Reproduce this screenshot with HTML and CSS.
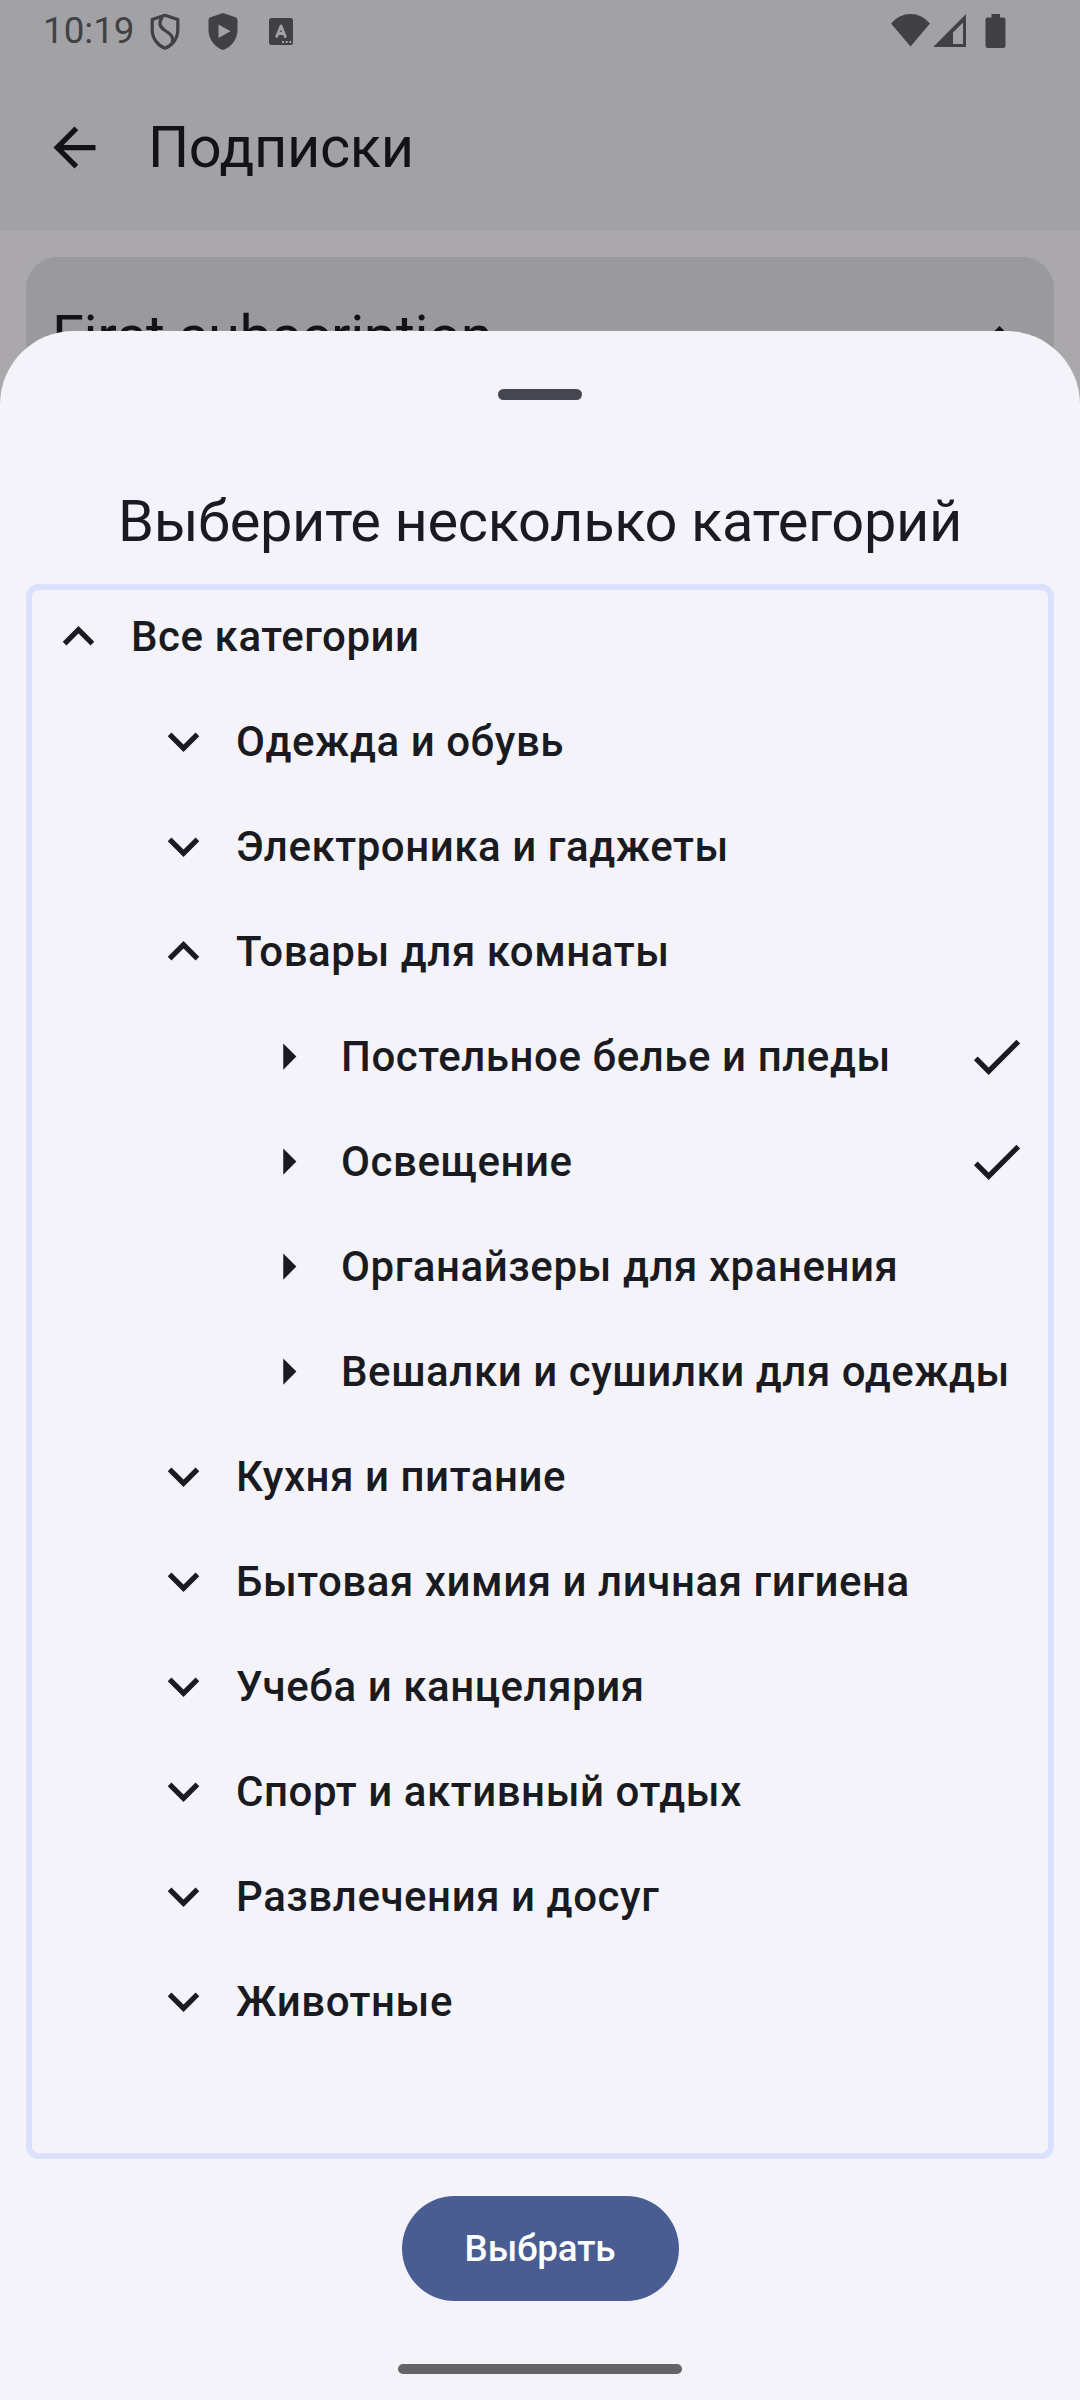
FILE: index.html
```html
<!DOCTYPE html>
<html lang="ru">
<head>
<meta charset="utf-8">
<title>Подписки</title>
<link rel="stylesheet" href="styles.css">
</head>
<body>
<svg class="defs" width="0" height="0">
  <symbol id="less" viewBox="0 0 24 24"><path d="M12 8l-6 6 1.41 1.41L12 10.83l4.59 4.58L18 14z"/></symbol>
  <symbol id="more" viewBox="0 0 24 24"><path d="M16.59 8.59L12 13.17 7.41 8.59 6 10l6 6 6-6z"/></symbol>
  <symbol id="right" viewBox="0 0 24 24"><path d="M10 17l5-5-5-5v10z"/></symbol>
  <symbol id="check" viewBox="0 0 24 24"><path d="M9 16.17L4.83 12l-1.42 1.41L9 19 21 7l-1.41-1.41z"/></symbol>
</svg>
<div class="screen">
  <header class="top">
    <div class="status">
      <span class="time">10:19</span>
      <svg class="shield" width="30" height="37" viewBox="0 0 30 37"><path d="M15 2.3L27.8 6.5V17c0 8.500-5.500 15.500-12.800 18.200C7.700 32.500 2.200 25.500 2.200 17V6.500z" fill="none" stroke="currentColor" stroke-width="3.200" stroke-linejoin="round"/><path d="M12.500 4C8.500 9 9 13.500 15 17.500c6 3.800 8.500 6 7.300 12" fill="none" stroke="currentColor" stroke-width="3.200"/></svg>
      <svg class="shield play" width="30" height="37" viewBox="0 0 30 37"><path d="M15 0L27.600 4.300Q29.500 5 29.500 7V17c0 9-6 17-14.500 20C6.500 34 .5 26 .5 17V7Q.5 5 2.400 4.300zM10.500 11.500v13.500L22.500 18.200z" fill="currentColor" fill-rule="evenodd"/></svg>
      <svg class="lang" width="24" height="27" viewBox="0 0 24 27"><rect width="24" height="27" rx="2.500" fill="currentColor"/><path d="M7.700 18.500L12 8l4.300 10.500M9.200 15.500h5.600" fill="none" stroke="#a2a1a6" stroke-width="2.800" stroke-linecap="round" stroke-linejoin="round"/><path d="M13 23h2v2h-2zM16.700 23h2v2h-2zM20.300 23h2v2h-2z" fill="#a2a1a6"/></svg>
      <span class="spacer"></span>
      <svg class="signals" width="115" height="35" viewBox="0 0 115 35" fill="currentColor"><path d="M0 9.500Q8 0 19.500 0T39 9.500L19.500 32.500z"/><path d="M75 0v33H42.200zM72 8.500L62 18.500V30h10z" fill-rule="evenodd"/><path d="M100.500 0h8.500v3.500h3.200q2.300 0 2.300 2.300v26q0 2.200-2.300 2.200H96.800q-2.300 0-2.300-2.200v-26q0-2.300 2.300-2.300h3.700z"/></svg>
    </div>
    <div class="appbar">
      <svg class="icon" viewBox="0 0 24 24"><path d="M20 11H7.830l5.590-5.590L12 4l-8 8 8 8 1.410-1.410L7.830 13H20z"/></svg>
      <h1 class="title">Подписки</h1>
    </div>
  </header>
  <main class="content">
    <section class="card"><span class="title">First subscription</span><svg class="icon"><use href="#less"/></svg></section>
  </main>

  <div class="sheet">
    <div class="handle"></div>
    <h2 class="title sheet-title">Выберите несколько категорий</h2>
    <div class="tree">
      <div class="row"><span class="toggle"><svg class="icon"><use href="#less"/></svg></span><span>Все категории</span></div>
      <div class="row l1"><span class="toggle"><svg class="icon"><use href="#more"/></svg></span><span>Одежда и обувь</span></div>
      <div class="row l1"><span class="toggle"><svg class="icon"><use href="#more"/></svg></span><span>Электроника и гаджеты</span></div>
      <div class="row l1"><span class="toggle"><svg class="icon"><use href="#less"/></svg></span><span>Товары для комнаты</span></div>
      <div class="row l2"><span class="toggle"><svg class="icon"><use href="#right"/></svg></span><span>Постельное белье и пледы</span><svg class="icon check"><use href="#check"/></svg></div>
      <div class="row l2"><span class="toggle"><svg class="icon"><use href="#right"/></svg></span><span>Освещение</span><svg class="icon check"><use href="#check"/></svg></div>
      <div class="row l2"><span class="toggle"><svg class="icon"><use href="#right"/></svg></span><span>Органайзеры для хранения</span></div>
      <div class="row l2"><span class="toggle"><svg class="icon"><use href="#right"/></svg></span><span>Вешалки и сушилки для одежды</span></div>
      <div class="row l1"><span class="toggle"><svg class="icon"><use href="#more"/></svg></span><span>Кухня и питание</span></div>
      <div class="row l1"><span class="toggle"><svg class="icon"><use href="#more"/></svg></span><span>Бытовая химия и личная гигиена</span></div>
      <div class="row l1"><span class="toggle"><svg class="icon"><use href="#more"/></svg></span><span>Учеба и канцелярия</span></div>
      <div class="row l1"><span class="toggle"><svg class="icon"><use href="#more"/></svg></span><span>Спорт и активный отдых</span></div>
      <div class="row l1"><span class="toggle"><svg class="icon"><use href="#more"/></svg></span><span>Развлечения и досуг</span></div>
      <div class="row l1"><span class="toggle"><svg class="icon"><use href="#more"/></svg></span><span>Животные</span></div>
    </div>
    <button class="choose">Выбрать</button>
    <div class="nav-pill"></div>
  </div>
</div>
</body>
</html>
```
FILE: styles.css
```css
* { box-sizing: border-box; }

body {
  margin: 0;
  font-family: Roboto, "Noto Sans", sans-serif;
  color: #1a1b21;
}

.defs { display: block; }

.screen {
  position: relative;
  width: 1080px;
  height: 2400px;
  overflow: hidden;
  background: #aaa8ad;
}

.icon {
  display: block;
  flex: none;
  width: 63px;
  height: 63px;
  fill: currentColor;
}

.title {
  margin: 0;
  font-size: 57.75px;
  font-weight: 400;
  line-height: 74px;
  letter-spacing: -0.34px;
  white-space: nowrap;
}

.top {
  height: 231px;
  background: #a2a1a6;
  color: #121217;
}

.status {
  display: flex;
  align-items: center;
  height: 63px;
  padding: 0 74px 0 43px;
  color: #414143;
}

.time {
  width: 107px;
  padding-bottom: 1px;
  font-size: 36.75px;
  line-height: 44px;
}

.play { margin-left: 28px; }
.lang { margin-left: 31px; }
.spacer { flex: 1; }

.appbar {
  display: flex;
  align-items: center;
  gap: 42px;
  height: 168px;
  padding: 0 43px;
}

.content { padding: 26px; }

.card {
  display: flex;
  align-items: center;
  justify-content: space-between;
  height: 158px;
  padding: 0 23px 0 26px;
  border-radius: 31.5px;
  background: #9a999d;
  color: #121217;
}

.sheet {
  position: absolute;
  inset: 331px 0 0;
  display: flex;
  flex-direction: column;
  align-items: center;
  padding-top: 58px;
  border-radius: 73.5px 73.5px 0 0;
  background: #f4f3fa;
}

.handle {
  width: 84px;
  height: 11px;
  border-radius: 5.5px;
  background: #45464f;
}

.sheet-title { margin-top: 84px; }

.tree {
  align-self: stretch;
  height: 1575px;
  margin: 26px 26px 0;
  border-radius: 13px;
  box-shadow: inset 0 0 0 6px #dae1ff;
}

.row {
  display: flex;
  align-items: center;
  height: 105px;
  padding-right: 26px;
  font-size: 42px;
  font-weight: 500;
  letter-spacing: 0.56px;
  white-space: nowrap;
}

.l1 { padding-left: 105px; }
.l2 { padding-left: 210px; }

.toggle {
  display: flex;
  flex: none;
  justify-content: center;
  width: 105px;
}

.check { margin-left: auto; }

.choose {
  width: 277px;
  height: 105px;
  margin-top: 37px;
  padding: 0;
  border: 0;
  border-radius: 52.5px;
  background: #495d92;
  color: #fff;
  font: 500 36.75px/52px Roboto, "Noto Sans", sans-serif;
  letter-spacing: -0.15px;
}

.nav-pill {
  width: 284px;
  height: 10px;
  margin-top: 63px;
  border-radius: 5px;
  background: #646466;
}
```
